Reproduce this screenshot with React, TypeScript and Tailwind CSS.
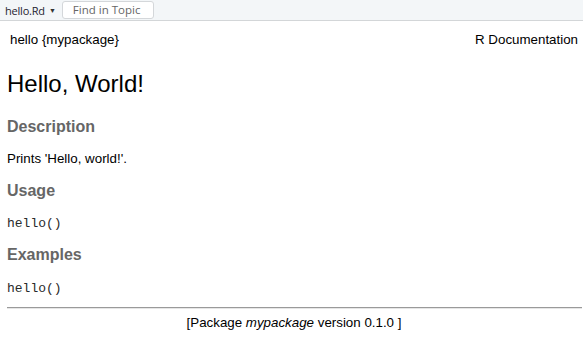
import React from "react";

export default function App() {
  const sans = { fontFamily: '"Liberation Sans", Arial, sans-serif' } as React.CSSProperties;
  const mono = { fontFamily: '"Liberation Mono", "Courier New", monospace' } as React.CSSProperties;
  return (
    <div className="w-[583px] h-[348px] bg-white overflow-hidden text-black" style={sans}>
      <div className="h-[21px] bg-[#f3f6f8] border-b border-[#d3d6d8] flex items-center" style={{ fontFamily: '"Open Sans", "Noto Sans", sans-serif' }}>
        <span className="ml-[5px] text-[11px] text-[#1f2430] leading-none tracking-[-0.2px]">hello.Rd</span>
        <span className="ml-[4px] text-[7px] text-[#333] leading-none">▼</span>
        <div className="ml-[6px] w-[92px] h-[18px] bg-white border border-[#d4d7da] rounded-[3px] flex items-center">
          <span className="ml-[10px] text-[11.5px] text-[#666] leading-none">Find in Topic</span>
        </div>
      </div>
      <div className="pl-[7px] pr-[2px]">
        <div className="mt-[11px] flex justify-between text-[13.33px] leading-[15px]">
          <span className="pl-[3px]">hello {"{"}mypackage{"}"}</span>
          <span className="pr-[3px]">R Documentation</span>
        </div>
        <h2 className="mt-[23px] text-[24px] leading-[28px] font-normal">Hello, World!</h2>
        <h3 className="mt-[20px] text-[16px] leading-[18px] font-bold text-[#666]">Description</h3>
        <p className="mt-[15px] text-[13.33px] leading-[15px]">Prints 'Hello, world!'.</p>
        <h3 className="mt-[16px] text-[16px] leading-[18px] font-bold text-[#666]">Usage</h3>
        <pre className="mt-[16px] text-[13px] leading-[15px] text-[#2a2a2a]" style={mono}>hello()</pre>
        <h3 className="mt-[15px] text-[16px] leading-[18px] font-bold text-[#666]">Examples</h3>
        <pre className="mt-[17px] text-[13px] leading-[15px] text-[#2a2a2a]" style={mono}>hello()</pre>
        <div className="mt-[11px] h-[2px] border-t border-[#9a9a9a] border-b border-b-[#e6e6e6] mr-[-1px]"></div>
        <div className="mt-[6px] text-center text-[13.33px] leading-[15px]">
          [Package <i>mypackage</i> version 0.1.0 ]
        </div>
      </div>
    </div>
  );
}
